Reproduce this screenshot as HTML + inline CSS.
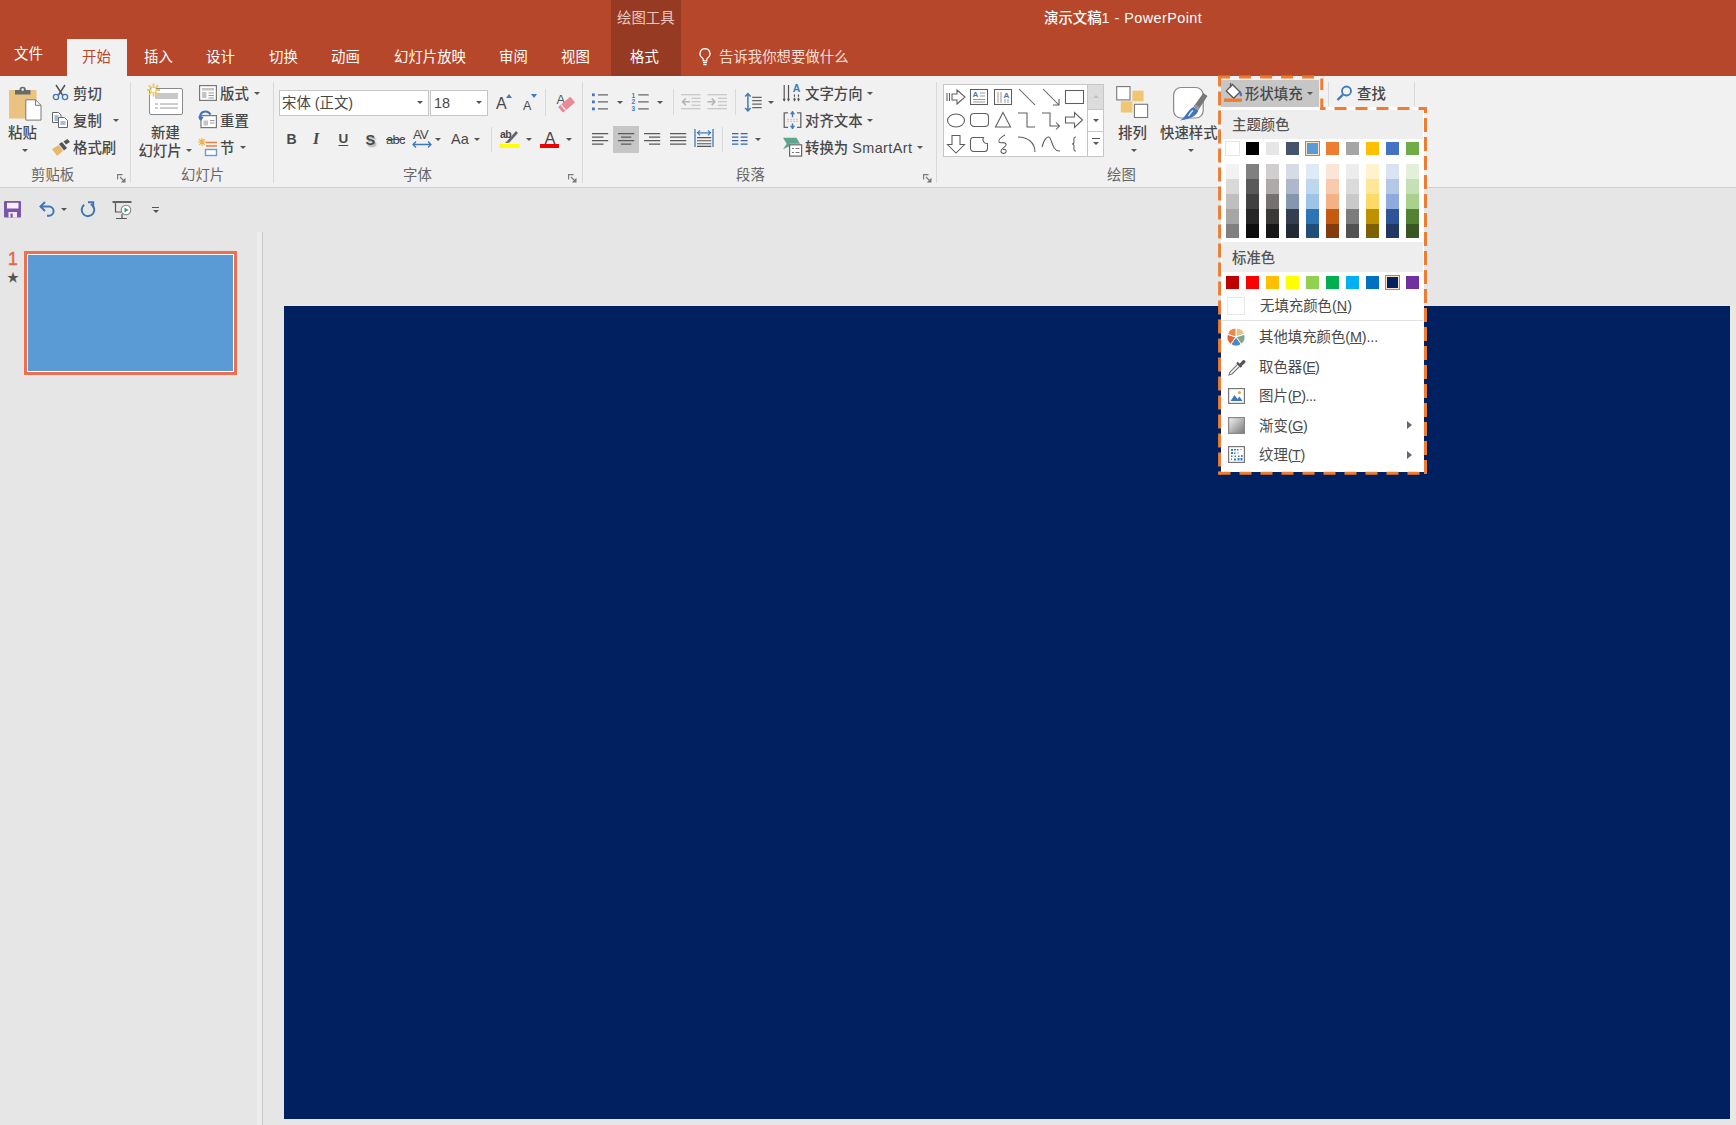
<!DOCTYPE html>
<html lang="zh-CN"><head><meta charset="utf-8"><title>演示文稿1 - PowerPoint</title>
<style>
*{box-sizing:border-box;margin:0;padding:0}
html,body{width:1736px;height:1125px;overflow:hidden;background:#e6e6e6}
body{position:relative;font-family:"Liberation Sans","Noto Sans CJK SC",sans-serif;font-size:14.4px;color:#484848;line-height:20px;font-weight:500}
.a{position:absolute}
.t{position:absolute;white-space:nowrap;height:22px;line-height:22px}
#title{left:0;top:0;width:1736px;height:76px;background:#b7472a}
#ctx{left:611px;top:0;width:70px;height:76px;background:#963a23}
#tabon{left:67px;top:39px;width:60px;height:38px;background:#f1f1f1}
.tab{color:#fff;top:46px;font-weight:400}
#ribbon{left:0;top:76px;width:1736px;height:112px;background:#f1f1f1;border-bottom:1px solid #d2d2d2}
.sep{position:absolute;width:1px;background:#d8d8d8;top:82px;height:101px}
.gl{color:#666;top:164px;font-weight:400}
.mi{font-weight:400;color:#4a4a4a}
.arr{position:absolute;width:0;height:0;border-left:3px solid transparent;border-right:3px solid transparent;border-top:3px solid #555}
svg{position:absolute;overflow:visible}
</style></head><body>
<div class="a" id="title"></div>
<div class="a" id="ctx"></div>
<div class="a" id="tabon"></div>
<div class="a" id="ribbon"></div>
<div class="t" style="left:617px;top:7px;color:#efc9bf;font-weight:400">绘图工具</div>
<div class="t" style="left:1044px;top:7px;color:#fff">演示文稿<span style="letter-spacing:.45px">1 - PowerPoint</span></div>
<div class="t tab" style="left:14px;top:43px">文件</div>
<div class="t tab" style="left:82px;color:#b7472a">开始</div>
<div class="t tab" style="left:144px">插入</div>
<div class="t tab" style="left:206px">设计</div>
<div class="t tab" style="left:269px">切换</div>
<div class="t tab" style="left:331px">动画</div>
<div class="t tab" style="left:394px">幻灯片放映</div>
<div class="t tab" style="left:499px">审阅</div>
<div class="t tab" style="left:561px">视图</div>
<div class="t tab" style="left:630px">格式</div>
<svg style="left:697px;top:47px" width="16" height="20" viewBox="0 0 16 20"><path d="M8 1.700a5 5 0 0 0-2.700 9.200c.6.500.9 1.100.9 1.800v1.100h3.600v-1.100c0-.7.300-1.300.9-1.800A5 5 0 0 0 8 1.700z" fill="none" stroke="#fff" stroke-width="1.300"/><path d="M6 15.600h4M6.400 17.600h3.200" stroke="#fff" stroke-width="1.200"/></svg>
<div class="t tab" style="left:719px;color:#f6ddd6;font-weight:400">告诉我你想要做什么</div>
<!--TABS-->
<!-- clipboard -->
<svg style="left:8px;top:84px" width="34" height="40" viewBox="0 0 34 40">
<rect x="1" y="6" width="27.500" height="28.500" fill="#eac282"/>
<path d="M7 10.500v-4.500h4.500a3.200 3.200 0 0 1 6.400 0h4.600v4.500z" fill="#6a6a6a"/><circle cx="14.700" cy="5.600" r="1.300" fill="#f1f1f1"/>
<path d="M17.800 15.800h9.700l5.500 5.500v14.800h-15.200z" fill="#fff" stroke="#7a7a7a" stroke-width="1"/><path d="M27.500 15.800v5.500h5.500" fill="none" stroke="#7a7a7a" stroke-width="1"/>
</svg>
<div class="t" style="left:8px;top:122px">粘贴</div>
<div class="arr" style="left:22px;top:149px"></div>
<svg style="left:52px;top:84px" width="17" height="17" viewBox="0 0 17 17">
<path d="M4 1l6.500 10M13 1L6.500 11" stroke="#555" stroke-width="1.500" fill="none"/>
<circle cx="4" cy="13" r="2.600" fill="none" stroke="#417ab9" stroke-width="1.400"/><circle cx="13" cy="13" r="2.600" fill="none" stroke="#417ab9" stroke-width="1.400"/>
</svg>
<div class="t" style="left:73px;top:83px">剪切</div>
<svg style="left:51px;top:111px" width="18" height="18" viewBox="0 0 18 18">
<path d="M1.500 1.500h6l2.500 2.500v7.500h-8.500z" fill="#fff" stroke="#666" stroke-width="1"/><path d="M3.500 5h4M3.500 7h4M3.500 9h4" stroke="#417ab9" stroke-width="1"/>
<path d="M7.500 6.500h6l3 3v7h-9z" fill="#fff" stroke="#666" stroke-width="1"/><path d="M9.500 11h5M9.500 13h5" stroke="#417ab9" stroke-width="1"/>
</svg>
<div class="t" style="left:73px;top:110px">复制</div>
<div class="arr" style="left:113px;top:119px"></div>
<svg style="left:51px;top:139px" width="20" height="18" viewBox="0 0 20 18">
<path d="M1 10l7-4 4 6-6 5z" fill="#e8b96a"/><path d="M8 5l3-2 5 6-3 2.500z" fill="#555"/><path d="M12.500 2.500l4-2.500 2.500 3-4 2.500z" fill="#555"/>
</svg>
<div class="t" style="left:73px;top:137px">格式刷</div>
<div class="t gl" style="left:31px">剪贴板</div>
<svg class="lau" style="left:117px;top:174px" width="9" height="9" viewBox="0 0 9 9"><path d="M.6 5.500V.6H5.500" fill="none" stroke="#777" stroke-width="1.100"/><path d="M3 3l4 4" stroke="#777" stroke-width="1.100"/><path d="M8.500 3.800v4.700H3.800z" fill="#777"/></svg>
<div class="sep" style="left:130px"></div>
<!-- slides -->
<svg style="left:146px;top:82px" width="38" height="36" viewBox="0 0 38 36">
<rect x="3.500" y="6.500" width="33" height="26" rx="1.500" fill="#fff" stroke="#8a8a8a"/>
<rect x="9" y="11" width="23" height="6" fill="#c8c8c8"/><path d="M9 22h3M14 22h18M9 26h3M14 26h18" stroke="#9a9a9a" stroke-width="1"/>
<g stroke="#f0c560" stroke-width="1.800"><path d="M7.500 1.500v13M1 8h13M2.900 3.400l9.200 9.200M12.100 3.400l-9.200 9.200"/></g><circle cx="7.500" cy="8" r="2.200" fill="#fff"/>
</svg>
<div class="t" style="left:151px;top:122px">新建</div>
<div class="t" style="left:138.500px;top:140px">幻灯片</div>
<div class="arr" style="left:186px;top:149px"></div>
<svg style="left:199px;top:85px" width="18" height="16" viewBox="0 0 18 16"><rect x=".6" y=".6" width="16.800" height="14.800" fill="#fff" stroke="#777" stroke-width="1.200"/><rect x="3" y="3" width="12" height="2.500" fill="#c4c4c4"/><rect x="3" y="7" width="4.500" height="6" fill="#c4c4c4"/><path d="M9.500 8h5.500M9.500 10.500h5.500M9.500 13h5.500" stroke="#999"/></svg>
<div class="t" style="left:220px;top:83px">版式</div><div class="arr" style="left:254px;top:92px"></div>
<svg style="left:198px;top:111px" width="20" height="18" viewBox="0 0 20 18"><rect x="3" y="4.600" width="15.400" height="12" fill="#fff" stroke="#777" stroke-width="1.200"/><rect x="5.500" y="9.500" width="4.500" height="5" fill="#c4c4c4"/><path d="M12 9.500h4.500M12 12h4.500" stroke="#999"/><path d="M2.500 8.500a5.500 5.500 0 0 1 10-5" fill="none" stroke="#3e76b6" stroke-width="2"/><path d="M0 5.500l2.800 4.500 3-4z" fill="#3e76b6"/></svg>
<div class="t" style="left:220px;top:110px">重置</div>
<svg style="left:198px;top:138px" width="20" height="19" viewBox="0 0 20 19"><g stroke="#eeb33f" stroke-width="1.200"><path d="M4 0v8M0 4h8M1.200 1.200l5.600 5.600M6.800 1.200l-5.600 5.600"/></g><path d="M8 4.500h11M8 8h11" stroke="#e0824a" stroke-width="1.600"/><rect x="7.500" y="11.500" width="11" height="6" fill="#fff" stroke="#6a9bd0" stroke-width="1.400"/></svg>
<div class="t" style="left:220px;top:137px">节</div><div class="arr" style="left:240px;top:146px"></div>
<div class="t gl" style="left:181px">幻灯片</div>
<div class="sep" style="left:273px"></div>
<!-- font -->
<div class="a" style="left:279px;top:90px;width:150px;height:26px;background:#fff;border:1px solid #c6c6c6"></div>
<div class="a" style="left:430px;top:90px;width:58px;height:26px;background:#fff;border:1px solid #c6c6c6"></div>
<div class="t" style="left:282px;top:92px;font-weight:400">宋体 (正文)</div><div class="arr" style="left:417px;top:101px"></div>
<div class="t" style="left:434px;top:92px">18</div><div class="arr" style="left:476px;top:101px"></div>
<div class="t" style="left:496px;top:93px;font-size:16px">A</div><div class="a" style="left:505.500px;top:94px;width:0;height:0;border-left:3px solid transparent;border-right:3px solid transparent;border-bottom:4px solid #417ab9"></div>
<div class="t" style="left:523px;top:94.500px;font-size:12.500px">A</div><div class="a" style="left:531px;top:94px;width:0;height:0;border-left:3px solid transparent;border-right:3px solid transparent;border-top:4px solid #417ab9"></div>
<div class="sep" style="left:545px;top:89px;height:27px"></div>
<svg style="left:555px;top:92px" width="20" height="20" viewBox="0 0 20 20"><text x="1.500" y="11.500" font-family="Liberation Sans,sans-serif" font-size="13" fill="#555">A</text><g transform="rotate(-40 11.500 12.500)"><rect x="3.500" y="9" width="16" height="7.500" rx="1" fill="#e88a98"/><rect x="6.500" y="9" width="1.300" height="7.500" fill="#f8e4e6"/></g></svg>
<div class="t" style="left:286.500px;top:128px;font-weight:bold;font-size:14px">B</div>
<div class="t" style="left:313px;top:128px;font-family:'Liberation Serif',serif;font-style:italic;font-weight:bold;font-size:16px">I</div>
<div class="t" style="left:338.500px;top:128px;font-weight:bold;font-size:13.500px;text-decoration:underline;text-underline-offset:1.500px">U</div>
<div class="t" style="left:365.500px;top:129px;font-weight:bold;font-size:14.500px;text-shadow:1.500px 1.500px 1.500px #aaa">S</div>
<div class="t" style="left:386px;top:129px;font-size:13px;text-decoration:line-through;letter-spacing:-.7px">abc</div>
<div class="t" style="left:413px;top:124px;font-size:13px;letter-spacing:-.8px">AV</div>
<svg style="left:411.500px;top:141px" width="20" height="7" viewBox="0 0 20 7"><path d="M1 3.500h18M4 .5l-3 3 3 3M16 .5l3 3-3 3" fill="none" stroke="#417ab9" stroke-width="1.300"/></svg>
<div class="arr" style="left:435px;top:138px"></div>
<div class="t" style="left:451px;top:128px;font-size:14.500px">Aa</div><div class="arr" style="left:474px;top:138px"></div>
<div class="sep" style="left:491px;top:127px;height:25px"></div>
<div class="t" style="left:500px;top:123px;font-size:10.500px;letter-spacing:-.6px;font-weight:bold">ab</div>
<svg style="left:498px;top:128px" width="22" height="22" viewBox="0 0 22 22"><path d="M9 13l9-10 2 2-9 10z" fill="#666"/><path d="M7 15l2-2 2 2z" fill="#666"/><rect x="1.500" y="16" width="20" height="4" fill="#ffff00"/></svg>
<div class="arr" style="left:526px;top:138px"></div>
<div class="t" style="left:544.500px;top:127px;font-size:16.500px">A</div><div class="a" style="left:540px;top:144px;width:19px;height:4px;background:#f00000"></div>
<div class="arr" style="left:566px;top:138px"></div>
<div class="t gl" style="left:403px">字体</div>
<svg class="lau" style="left:568px;top:174px" width="9" height="9" viewBox="0 0 9 9"><path d="M.6 5.500V.6H5.500" fill="none" stroke="#777" stroke-width="1.100"/><path d="M3 3l4 4" stroke="#777" stroke-width="1.100"/><path d="M8.500 3.800v4.700H3.800z" fill="#777"/></svg>
<div class="sep" style="left:582px"></div>
<!-- paragraph -->
<svg style="left:592px;top:93px" width="17" height="18" viewBox="0 0 17 18"><g fill="#417ab9"><rect x="0" y=".4" width="2.800" height="2.800"/><rect x="0" y="7.500" width="2.800" height="2.800"/><rect x="0" y="14.500" width="2.800" height="2.800"/></g><path d="M6 1.800h10M6 8.900h10M6 15.900h10" stroke="#666" stroke-width="1.200"/></svg>
<div class="arr" style="left:616.500px;top:101px"></div>
<svg style="left:631px;top:93px" width="19" height="18" viewBox="0 0 19 18"><g fill="#417ab9" font-size="6.500" font-weight="bold" font-family="Liberation Sans,sans-serif"><text x=".5" y="4.500">1</text><text x=".5" y="11.300">2</text><text x=".5" y="18">3</text></g><path d="M7.200 1.800h10.500M7.200 8.900h10.500M7.200 15.900h10.500" stroke="#666" stroke-width="1.200"/></svg>
<div class="arr" style="left:657px;top:101px"></div>
<div class="sep" style="left:673px;top:89px;height:26px"></div>
<svg style="left:681px;top:94px" width="20" height="16" viewBox="0 0 20 16"><path d="M0 .7h19.500M10.500 4.200h9M10.500 7.800h9M10.500 11.300h9M0 14.800h19.500" stroke="#bdbdbd" stroke-width="1.100"/><path d="M9 7.800H1.500M4.800 4.500L1.500 7.800l3.300 3.300" fill="none" stroke="#b4b4b4" stroke-width="1.500"/></svg>
<svg style="left:707px;top:94px" width="20" height="16" viewBox="0 0 20 16"><path d="M.5 .7h19.500M11 4.200h9M11 7.800h9M11 11.300h9M.5 14.800h19.500" stroke="#bdbdbd" stroke-width="1.100"/><path d="M.5 7.800h7.500M4.700 4.500l3.300 3.300-3.300 3.300" fill="none" stroke="#b4b4b4" stroke-width="1.500"/></svg>
<div class="sep" style="left:735px;top:89px;height:26px"></div>
<svg style="left:744px;top:92px" width="19" height="20" viewBox="0 0 19 20"><path d="M8.200 5.300h9.500M8.200 8.700h9.500M8.200 12.200h9.500M8.200 15.600h9.500" stroke="#666" stroke-width="1.200"/><path d="M3.900 1.500v17M1.200 4.500L3.900 1.500l2.700 3M1.200 16l2.700 3 2.700-3" fill="none" stroke="#417ab9" stroke-width="1.500"/></svg>
<div class="arr" style="left:767.500px;top:101px"></div>
<div class="a" style="left:613px;top:126px;width:26px;height:27px;background:#c6c6c6"></div>
<svg style="left:592px;top:132px" width="17" height="15" viewBox="0 0 17 15"><path d="M0 1.600h16.200M0 5.100h11.500M0 8.600h16.200M0 12.200h11.500" stroke="#5a5a5a" stroke-width="1.200"/></svg>
<svg style="left:618px;top:132px" width="17" height="15" viewBox="0 0 17 15"><path d="M0 1.600h16.200M3 5.100h10.300M0 8.600h16.200M3 12.200h10.300" stroke="#5a5a5a" stroke-width="1.200"/></svg>
<svg style="left:644px;top:132px" width="17" height="15" viewBox="0 0 17 15"><path d="M0 1.600h16.200M5 5.100h11.200M0 8.600h16.200M5 12.200h11.200" stroke="#5a5a5a" stroke-width="1.200"/></svg>
<svg style="left:670px;top:132px" width="17" height="15" viewBox="0 0 17 15"><path d="M0 1.600h16.200M0 5.100h16.200M0 8.600h16.200M0 12.200h16.200" stroke="#5a5a5a" stroke-width="1.200"/></svg>
<svg style="left:694px;top:129px" width="20" height="18" viewBox="0 0 20 18"><path d="M1 0v18M19 0v18" stroke="#417ab9" stroke-width="1.300"/><path d="M3.500 3.800h13M6 1.300l-2.500 2.500 2.500 2.500M14 1.300l2.500 2.500-2.500 2.500" fill="none" stroke="#417ab9" stroke-width="1.200"/><path d="M3 8.600h14.300M3 11.800h14.300M3 14.800h14.300M3 17.400h14.300" stroke="#555" stroke-width="1.100"/></svg>
<div class="sep" style="left:722px;top:127px;height:25px"></div>
<svg style="left:732px;top:132px" width="17" height="15" viewBox="0 0 17 15"><path d="M0 1.600h6.400M8.700 1.600h6.900M0 5.100h6.400M8.700 5.100h6.900M0 8.600h6.400M8.700 8.600h6.900M0 12.200h6.400M8.700 12.200h6.900" stroke="#3567a8" stroke-width="1.300"/></svg>
<div class="arr" style="left:754.500px;top:138px"></div>
<svg style="left:783px;top:83px" width="18" height="20" viewBox="0 0 18 20"><path d="M1.200 2v16M5.500 2v16" stroke="#555" stroke-width="1.200"/><path d="M11.500 11.500v6.500M15.500 11.500v6.500" stroke="#555" stroke-width="1.200" stroke-dasharray="2.200 1"/><path d="M-.3 15.800l1.500 3 1.500-3zM4 15.800l1.500 3 1.500-3zM10 15.800l1.500 3 1.500-3zM14 15.800l1.500 3 1.500-3z" fill="#555"/><text x="9.800" y="9" font-size="10.500" font-weight="bold" fill="#417ab9" font-family="Liberation Sans,sans-serif">A</text></svg>
<div class="t" style="left:805px;top:83px">文字方向</div><div class="arr" style="left:866.500px;top:92px"></div>
<svg style="left:783px;top:110px" width="19" height="20" viewBox="0 0 19 20"><path d="M5 2.800H1.200v14.500H5M14 2.800h3.800v14.500H14" fill="none" stroke="#666" stroke-width="1.300"/><path d="M4 9.300h11M4 11.300h11" stroke="#e9b7a6" stroke-width="1" stroke-dasharray="2 1"/><path d="M9.500 1.200v6M9.500 19v-5.500" fill="none" stroke="#417ab9" stroke-width="1.400"/><path d="M6.800 4.200L9.500 1l2.700 3.200zM6.800 15.800l2.700 3.400 2.700-3.400z" fill="#417ab9"/></svg>
<div class="t" style="left:805px;top:110px">对齐文本</div><div class="arr" style="left:866.500px;top:119px"></div>
<svg style="left:783px;top:137px" width="20" height="21" viewBox="0 0 20 21"><path d="M0 .7h13.500l3.500 6H6.500v2.500l-6.500 3 3.700-5.500z" fill="#5fa58c"/><rect x="6.600" y="7.800" width="12" height="11.300" fill="#fff" stroke="#666" stroke-width="1.200"/><path d="M9 11.500h2M12.500 11.500h4M9 15.500h2M12.500 15.500h4" stroke="#777" stroke-width="1.100"/></svg>
<div class="t" style="left:805px;top:137px">转换为 <span style="letter-spacing:.45px">SmartArt</span></div><div class="arr" style="left:917px;top:146px"></div>
<div class="t gl" style="left:736px">段落</div>
<svg class="lau" style="left:923px;top:174px" width="9" height="9" viewBox="0 0 9 9"><path d="M.6 5.500V.6H5.500" fill="none" stroke="#777" stroke-width="1.100"/><path d="M3 3l4 4" stroke="#777" stroke-width="1.100"/><path d="M8.500 3.800v4.700H3.800z" fill="#777"/></svg>
<div class="sep" style="left:936px"></div>
<!-- drawing -->
<div class="a" style="left:943px;top:84px;width:161px;height:73px;background:#fff;border:1px solid #c6c6c6"></div>
<div class="a" style="left:1087px;top:85px;width:16px;height:24px;background:#dcdcdc"></div><div class="a" style="left:1087px;top:84px;width:1px;height:73px;background:#c6c6c6"></div><div class="a" style="left:1087px;top:109px;width:17px;height:1px;background:#c6c6c6"></div><div class="a" style="left:1087px;top:131px;width:17px;height:1px;background:#c6c6c6"></div>
<div class="a" style="left:1093px;top:95px;width:0;height:0;border-left:3px solid transparent;border-right:3px solid transparent;border-bottom:3px solid #c0c0c0"></div><div class="arr" style="left:1093px;top:119px"></div><div class="a" style="left:1092px;top:138px;width:8px;height:1px;background:#555"></div><div class="arr" style="left:1093px;top:142px"></div>
<svg style="left:946px;top:86.5px" width="20" height="20" viewBox="0 0 20 20"><path d="M1 6v8M3.500 6v8M6 7h5V3l8 7-8 7v-4H6z" fill="none" stroke="#5e5e5e" stroke-width="1.05"/></svg>
<svg style="left:969px;top:86.5px" width="20" height="20" viewBox="0 0 20 20"><rect x="1.500" y="2.500" width="17" height="15" fill="none" stroke="#5e5e5e" stroke-width="1.05"/><text x="3.500" y="10" font-size="8" font-weight="bold" fill="#417ab9" font-family="Liberation Sans,sans-serif">A</text><path d="M11 6h5M11 9h5M4 12.500h12M4 15h12" stroke="#999" stroke-width="1"/></svg>
<svg style="left:993px;top:86.5px" width="20" height="20" viewBox="0 0 20 20"><rect x="1.500" y="2.500" width="17" height="15" fill="none" stroke="#5e5e5e" stroke-width="1.05"/><text x="10.500" y="10.500" font-size="8" font-weight="bold" fill="#417ab9" font-family="Liberation Sans,sans-serif">A</text><path d="M5 5v11M8 5v11M12 12v4M15 12v4" stroke="#999" stroke-width="1"/></svg>
<svg style="left:1017px;top:86.5px" width="20" height="20" viewBox="0 0 20 20"><path d="M2 2l16 16" fill="none" stroke="#5e5e5e" stroke-width="1.05"/></svg>
<svg style="left:1041px;top:86.5px" width="20" height="20" viewBox="0 0 20 20"><path d="M2 2l16 16M18 12v6h-6" fill="none" stroke="#5e5e5e" stroke-width="1.05"/></svg>
<svg style="left:1064px;top:86.5px" width="20" height="20" viewBox="0 0 20 20"><rect x="1.500" y="3.500" width="18" height="13" fill="none" stroke="#5e5e5e" stroke-width="1.05"/></svg>
<svg style="left:946px;top:110px" width="20" height="20" viewBox="0 0 20 20"><ellipse cx="10" cy="10.500" rx="8.500" ry="6.500" fill="none" stroke="#5e5e5e" stroke-width="1.05"/></svg>
<svg style="left:969px;top:110px" width="20" height="20" viewBox="0 0 20 20"><rect x="1.500" y="3.500" width="18" height="13" rx="3.500" fill="none" stroke="#5e5e5e" stroke-width="1.05"/></svg>
<svg style="left:993px;top:110px" width="20" height="20" viewBox="0 0 20 20"><path d="M10 2.500l7.500 14.500h-15z" fill="none" stroke="#5e5e5e" stroke-width="1.05"/></svg>
<svg style="left:1017px;top:110px" width="20" height="20" viewBox="0 0 20 20"><path d="M1 3h9v14h8" fill="none" stroke="#5e5e5e" stroke-width="1.05"/></svg>
<svg style="left:1041px;top:110px" width="20" height="20" viewBox="0 0 20 20"><path d="M1 3h8v13h9M15 12.500l3.500 3.500-3.500 3.500" fill="none" stroke="#5e5e5e" stroke-width="1.05"/></svg>
<svg style="left:1064px;top:110px" width="20" height="20" viewBox="0 0 20 20"><path d="M1.500 7h9V2.500l8 7.500-8 7.500V13h-9z" fill="none" stroke="#5e5e5e" stroke-width="1.05"/></svg>
<svg style="left:946px;top:133.5px" width="20" height="20" viewBox="0 0 20 20"><path d="M6 1.500h8v9h4.500L10 19 1.500 10.500H6z" fill="none" stroke="#5e5e5e" stroke-width="1.05"/></svg>
<svg style="left:969px;top:133.5px" width="20" height="20" viewBox="0 0 20 20"><path d="M3.500 3.500h11a4 4 0 0 0 4 6v5a3 3 0 0 1-3 3h-11a3 3 0 0 1-3-3v-8a3 3 0 0 1 2-3z" fill="none" stroke="#5e5e5e" stroke-width="1.05"/></svg>
<svg style="left:993px;top:133.5px" width="20" height="20" viewBox="0 0 20 20"><path d="M12 1c-4 2-7 5-6 7s6-1 7 2-5 4-5 7 4 3 5 1-2-4-3-2" fill="none" stroke="#5e5e5e" stroke-width="1.05"/></svg>
<svg style="left:1017px;top:133.5px" width="20" height="20" viewBox="0 0 20 20"><path d="M1 3c9 0 17 5 17 15" fill="none" stroke="#5e5e5e" stroke-width="1.05"/></svg>
<svg style="left:1041px;top:133.5px" width="20" height="20" viewBox="0 0 20 20"><path d="M1 13c2-8 6-12 8-9s3 14 10 13" fill="none" stroke="#5e5e5e" stroke-width="1.05"/></svg>
<svg style="left:1064px;top:133.5px" width="20" height="20" viewBox="0 0 20 20"><path d="M12 3c-3 0-2 3-2 5s-1 2-2 2c1 0 2 0 2 2s-1 5 2 5" fill="none" stroke="#5e5e5e" stroke-width="1.05"/></svg>
<svg style="left:1116px;top:86px" width="33" height="33" viewBox="0 0 33 33"><rect x="16.400" y="4.700" width="11.200" height="10.600" fill="#f0c671"/><rect x="4.800" y="15.300" width="11.600" height="11.200" fill="#f0c671"/><rect x=".7" y=".6" width="13.300" height="13.300" fill="#fff" stroke="#777" stroke-width="1.100"/><rect x="18.400" y="18.300" width="13.200" height="13.200" fill="#fff" stroke="#777" stroke-width="1.100"/></svg>
<div class="t" style="left:1118px;top:122px">排列</div><div class="arr" style="left:1131px;top:149px"></div>
<svg style="left:1170px;top:84px" width="38" height="38" viewBox="0 0 38 38"><rect x="3.600" y="3.500" width="29.600" height="30.500" rx="7.500" fill="#fff" stroke="#8a8a8a" stroke-width="1.200"/><path d="M33.300 9l4.200 3-9.200 14-4.800-3.200z" fill="#777"/><path d="M25.200 20.300l4.800 3.200-1.300 2-4.800-3.200z" fill="#9a9a9a"/><path d="M23.300 23l5 3.300c-1.500 5.500-7 8.500-18.300 10.200 5.500-3 6.500-9.500 13.300-13.500z" fill="#4477b8"/><path d="M23 26.500c-2 1.500-3 3.500-4.500 5.500" stroke="#dfe9f5" stroke-width="1.500" fill="none"/></svg>
<div class="t" style="left:1160px;top:122px">快速样式</div><div class="arr" style="left:1188px;top:149px"></div>
<div class="t gl" style="left:1107px">绘图</div>
<!-- fill button -->
<div class="a" style="left:1221px;top:80px;width:98px;height:27px;background:#c6c6c6"></div>
<svg style="left:1224px;top:82px" width="19" height="21" viewBox="0 0 19 21"><path d="M8.500 2.500l7.500 7.500-6.300 6.300-7.400-7.400z" fill="#fff" stroke="#555" stroke-width="1.300"/><path d="M6.500 1v4.500" stroke="#555" stroke-width="1.300"/><path d="M16 8.500c1.800 2.500 2.800 4.500 1.600 5.600s-2.900-.3-1.600-5.600z" fill="#417ab9"/><rect x="0" y="16.500" width="18" height="3.400" fill="#ed7d31"/></svg>
<div class="t" style="left:1245px;top:83px">形状填充</div><div class="arr" style="left:1307px;top:92px"></div>
<div class="sep" style="left:1328px;top:82px;height:24px"></div>
<svg style="left:1336px;top:85px" width="17" height="17" viewBox="0 0 17 17"><circle cx="10.500" cy="6" r="4.500" fill="none" stroke="#417ab9" stroke-width="1.800"/><path d="M7 9.500L1.500 15" stroke="#417ab9" stroke-width="2.400"/></svg>
<div class="t" style="left:1357px;top:83px">查找</div>
<div class="sep" style="left:1414px;top:82px;height:24px"></div>
<!--RIBBON-->
<!-- QAT -->
<svg style="left:4px;top:201px" width="17" height="17" viewBox="0 0 17 17"><rect x="0" y="0" width="17" height="16.500" rx="1" fill="#7a56a8"/><rect x="3" y="1.800" width="11.500" height="5.700" fill="#fbeefb"/><rect x="4.500" y="11" width="8.500" height="5.500" fill="#f4e8f6"/><rect x="6.500" y="12.500" width="2.200" height="4" fill="#7a56a8"/></svg>
<svg style="left:38px;top:200px" width="18" height="18" viewBox="0 0 18 18"><path d="M2.500 6.500h8.500a4.600 4.600 0 0 1 0 9.200h-2" fill="none" stroke="#3e76b6" stroke-width="2"/><path d="M7 2l-4.500 4.500 4.500 4.500" fill="none" stroke="#3e76b6" stroke-width="2"/></svg>
<div class="arr" style="left:61px;top:208px"></div>
<svg style="left:79px;top:200px" width="18" height="18" viewBox="0 0 18 18"><path d="M11.800 4.200a6.300 6.300 0 1 1-6.600.6" fill="none" stroke="#3e76b6" stroke-width="2"/><path d="M9 2.200h5.200v5.200" fill="none" stroke="#3e76b6" stroke-width="2"/></svg>
<svg style="left:112px;top:201px" width="21" height="19" viewBox="0 0 21 19"><path d="M.5 1h19" stroke="#555" stroke-width="1.800"/><path d="M3.500 2v9h6M10 13v4M4 17.500h11" fill="none" stroke="#555" stroke-width="1.200"/><circle cx="14" cy="9" r="4.800" fill="#fff" stroke="#888" stroke-width="1.100"/><path d="M12.500 6.500l4 2.500-4 2.500z" fill="#3a9a6a"/></svg>
<div class="a" style="left:152px;top:207px;width:7px;height:1px;background:#555"></div>
<div class="arr" style="left:152.500px;top:210px"></div>
<!--QAT-->
<!-- panel -->
<div class="t" style="left:8px;top:248px;font-size:17.500px;color:#e0694a;-webkit-text-stroke:.5px #e0694a">1</div>
<div class="t" style="left:7px;top:267px;font-size:12px;color:#555">★</div>
<div class="a" style="left:24px;top:251px;width:213px;height:124px;border:3px solid #ee6e4f;background:#5b9bd5;box-shadow:inset 0 0 0 1px #fff"></div>
<div class="a" style="left:257px;top:232px;width:5px;height:893px;background:#ececec"></div>
<div class="a" style="left:262px;top:232px;width:1px;height:893px;background:#c8c8c8"></div>
<!--PANEL-->
<!-- slide -->
<div class="a" style="left:1730px;top:306px;width:6px;height:813px;background:linear-gradient(90deg,#e2e9ea,#ece9dd 55%,#ece2e5)"></div>
<div class="a" style="left:284px;top:306px;width:1446px;height:813px;background:#002060"></div>
<!--SLIDE-->
<!-- dropdown -->
<div class="a" style="left:1221px;top:107px;width:203px;height:365px;background:#fff"></div>
<div class="a" style="left:1222px;top:110px;width:201px;height:29px;background:#eee"></div>
<div class="t" style="left:1232px;top:114px;font-weight:500;color:#555">主题颜色</div>
<div class="a" style="left:1222px;top:242px;width:201px;height:30px;background:#eee"></div>
<div class="t" style="left:1232px;top:247px;font-weight:500;color:#555">标准色</div>
<div class="a" style="left:1226px;top:142px;width:13px;height:13px;background:#FFFFFF;outline:1px solid #e6e6e6"></div><div class="a" style="left:1226px;top:164px;width:13px;height:15px;background:#F2F2F2"></div><div class="a" style="left:1226px;top:179px;width:13px;height:15px;background:#D9D9D9"></div><div class="a" style="left:1226px;top:194px;width:13px;height:15px;background:#BFBFBF"></div><div class="a" style="left:1226px;top:209px;width:13px;height:15px;background:#A6A6A6"></div><div class="a" style="left:1226px;top:224px;width:13px;height:14px;background:#808080"></div>
<div class="a" style="left:1246px;top:142px;width:13px;height:13px;background:#000000"></div><div class="a" style="left:1246px;top:164px;width:13px;height:15px;background:#808080"></div><div class="a" style="left:1246px;top:179px;width:13px;height:15px;background:#595959"></div><div class="a" style="left:1246px;top:194px;width:13px;height:15px;background:#404040"></div><div class="a" style="left:1246px;top:209px;width:13px;height:15px;background:#262626"></div><div class="a" style="left:1246px;top:224px;width:13px;height:14px;background:#0D0D0D"></div>
<div class="a" style="left:1266px;top:142px;width:13px;height:13px;background:#E7E6E6"></div><div class="a" style="left:1266px;top:164px;width:13px;height:15px;background:#D0CECE"></div><div class="a" style="left:1266px;top:179px;width:13px;height:15px;background:#AEAAAA"></div><div class="a" style="left:1266px;top:194px;width:13px;height:15px;background:#767171"></div><div class="a" style="left:1266px;top:209px;width:13px;height:15px;background:#3B3838"></div><div class="a" style="left:1266px;top:224px;width:13px;height:14px;background:#181717"></div>
<div class="a" style="left:1286px;top:142px;width:13px;height:13px;background:#44546A"></div><div class="a" style="left:1286px;top:164px;width:13px;height:15px;background:#D6DCE5"></div><div class="a" style="left:1286px;top:179px;width:13px;height:15px;background:#ADB9CA"></div><div class="a" style="left:1286px;top:194px;width:13px;height:15px;background:#8497B0"></div><div class="a" style="left:1286px;top:209px;width:13px;height:15px;background:#333F50"></div><div class="a" style="left:1286px;top:224px;width:13px;height:14px;background:#222A35"></div>
<div class="a" style="left:1306px;top:142px;width:13px;height:13px;background:#5B9BD5"></div><div class="a" style="left:1306px;top:164px;width:13px;height:15px;background:#DEEBF7"></div><div class="a" style="left:1306px;top:179px;width:13px;height:15px;background:#BDD7EE"></div><div class="a" style="left:1306px;top:194px;width:13px;height:15px;background:#9DC3E6"></div><div class="a" style="left:1306px;top:209px;width:13px;height:15px;background:#2E75B6"></div><div class="a" style="left:1306px;top:224px;width:13px;height:14px;background:#1F4E79"></div>
<div class="a" style="left:1326px;top:142px;width:13px;height:13px;background:#ED7D31"></div><div class="a" style="left:1326px;top:164px;width:13px;height:15px;background:#FBE5D6"></div><div class="a" style="left:1326px;top:179px;width:13px;height:15px;background:#F8CBAD"></div><div class="a" style="left:1326px;top:194px;width:13px;height:15px;background:#F4B183"></div><div class="a" style="left:1326px;top:209px;width:13px;height:15px;background:#C55A11"></div><div class="a" style="left:1326px;top:224px;width:13px;height:14px;background:#843C0C"></div>
<div class="a" style="left:1346px;top:142px;width:13px;height:13px;background:#A5A5A5"></div><div class="a" style="left:1346px;top:164px;width:13px;height:15px;background:#EDEDED"></div><div class="a" style="left:1346px;top:179px;width:13px;height:15px;background:#DBDBDB"></div><div class="a" style="left:1346px;top:194px;width:13px;height:15px;background:#C9C9C9"></div><div class="a" style="left:1346px;top:209px;width:13px;height:15px;background:#7C7C7C"></div><div class="a" style="left:1346px;top:224px;width:13px;height:14px;background:#525252"></div>
<div class="a" style="left:1366px;top:142px;width:13px;height:13px;background:#FFC000"></div><div class="a" style="left:1366px;top:164px;width:13px;height:15px;background:#FFF2CC"></div><div class="a" style="left:1366px;top:179px;width:13px;height:15px;background:#FFE699"></div><div class="a" style="left:1366px;top:194px;width:13px;height:15px;background:#FFD966"></div><div class="a" style="left:1366px;top:209px;width:13px;height:15px;background:#BF9000"></div><div class="a" style="left:1366px;top:224px;width:13px;height:14px;background:#7F6000"></div>
<div class="a" style="left:1386px;top:142px;width:13px;height:13px;background:#4472C4"></div><div class="a" style="left:1386px;top:164px;width:13px;height:15px;background:#DAE3F3"></div><div class="a" style="left:1386px;top:179px;width:13px;height:15px;background:#B4C7E7"></div><div class="a" style="left:1386px;top:194px;width:13px;height:15px;background:#8FAADC"></div><div class="a" style="left:1386px;top:209px;width:13px;height:15px;background:#2F5597"></div><div class="a" style="left:1386px;top:224px;width:13px;height:14px;background:#203864"></div>
<div class="a" style="left:1406px;top:142px;width:13px;height:13px;background:#70AD47"></div><div class="a" style="left:1406px;top:164px;width:13px;height:15px;background:#E2F0D9"></div><div class="a" style="left:1406px;top:179px;width:13px;height:15px;background:#C5E0B4"></div><div class="a" style="left:1406px;top:194px;width:13px;height:15px;background:#A9D18E"></div><div class="a" style="left:1406px;top:209px;width:13px;height:15px;background:#548235"></div><div class="a" style="left:1406px;top:224px;width:13px;height:14px;background:#385723"></div>
<div class="a" style="left:1226px;top:276px;width:13px;height:13px;background:#C00000"></div><div class="a" style="left:1246px;top:276px;width:13px;height:13px;background:#FF0000"></div><div class="a" style="left:1266px;top:276px;width:13px;height:13px;background:#FFC000"></div><div class="a" style="left:1286px;top:276px;width:13px;height:13px;background:#FFFF00"></div><div class="a" style="left:1306px;top:276px;width:13px;height:13px;background:#92D050"></div><div class="a" style="left:1326px;top:276px;width:13px;height:13px;background:#00B050"></div><div class="a" style="left:1346px;top:276px;width:13px;height:13px;background:#00B0F0"></div><div class="a" style="left:1366px;top:276px;width:13px;height:13px;background:#0070C0"></div><div class="a" style="left:1386px;top:276px;width:13px;height:13px;background:#002060"></div><div class="a" style="left:1406px;top:276px;width:13px;height:13px;background:#7030A0"></div>
<div class="a" style="left:1305px;top:141px;width:15px;height:15px;border:1px solid #e8762c;box-shadow:inset 0 0 0 1px #fbe0c8"></div>
<div class="a" style="left:1385px;top:275px;width:15px;height:15px;border:1px solid #e8762c;box-shadow:inset 0 0 0 1px #fbe0c8"></div>
<div class="a" style="left:1227px;top:297px;width:18px;height:18px;background:#fff;border:1px solid #e8e8e8"></div>
<div class="t mi" style="left:1260px;top:295px">无填充颜色(<u>N</u>)</div>
<div class="a" style="left:1222px;top:320px;width:201px;height:1px;background:#e1e1e1"></div>
<svg style="left:1227px;top:328px" width="18" height="18" viewBox="0 0 18 18"><g stroke="#fff" stroke-width="1"><path d="M9 9L9 0A9 9 0 0 1 17.560 6.220z" fill="#e8c08a"/><path d="M9 9L17.560 6.220A9 9 0 0 1 14.290 16.280z" fill="#7aa88a"/><path d="M9 9L14.290 16.280A9 9 0 0 1 3.710 16.280z" fill="#4d86c0"/><path d="M9 9L3.710 16.280A9 9 0 0 1 .44 6.220z" fill="#e0673a"/><path d="M9 9L.44 6.220A9 9 0 0 1 9 0z" fill="#e68a4c"/></g></svg>
<div class="t mi" style="left:1259px;top:326px">其他填充颜色<span style="letter-spacing:-.15px">(<u>M</u>)...</span></div>
<svg style="left:1227px;top:358px" width="19" height="19" viewBox="0 0 19 19"><path d="M2 17l1-3 8-8 2 2-8 8z" fill="#fff" stroke="#777" stroke-width="1.100"/><path d="M10 4.500l4.500 4.500" stroke="#555" stroke-width="2.200"/><path d="M12 6.500l3.500-4a1.700 1.700 0 0 1 2.500 2.500l-4 3.500z" fill="#555"/></svg>
<div class="t mi" style="left:1259px;top:356px">取色器<span style="letter-spacing:-.8px">(<u>E</u>)</span></div>
<svg style="left:1228px;top:388px" width="17" height="16" viewBox="0 0 17 16"><rect x=".6" y=".6" width="15.800" height="14.800" fill="#fff" stroke="#777" stroke-width="1.200"/><path d="M2.500 13l4-6 3 4 2-2.500 3 4.500z" fill="#3f78b8"/><circle cx="11.500" cy="4.500" r="1.500" fill="#e8a33d"/></svg>
<div class="t mi" style="left:1259px;top:385px">图片<span style="letter-spacing:-.5px">(<u>P</u>)...</span></div>
<svg style="left:1228px;top:417px" width="17" height="17" viewBox="0 0 17 17"><defs><linearGradient id="gr" x1="0" y1="0" x2="1" y2="1"><stop offset="0" stop-color="#f4f4f4"/><stop offset="1" stop-color="#777"/></linearGradient></defs><rect x=".6" y=".6" width="15.800" height="15.800" fill="url(#gr)" stroke="#888" stroke-width="1.200"/></svg>
<div class="t mi" style="left:1259px;top:415px">渐变<span style="letter-spacing:-.45px">(<u>G</u>)</span></div>
<div class="a" style="left:1407px;top:421px;width:0;height:0;border-top:4px solid transparent;border-bottom:4px solid transparent;border-left:5px solid #666"></div>
<svg style="left:1228px;top:446px" width="17" height="17" viewBox="0 0 17 17"><rect x=".6" y=".6" width="15.800" height="15.800" fill="#fff" stroke="#777" stroke-width="1.200"/><g fill="#3f78b8"><rect x="3" y="3" width="2" height="2"/><rect x="6" y="3" width="2" height="1.500"/><rect x="9" y="3" width="1.500" height="1.500"/><rect x="12.500" y="3" width="1" height="1"/><rect x="3" y="6" width="2" height="2"/><rect x="6" y="6.500" width="1.500" height="1.500"/><rect x="9.500" y="6.500" width="1" height="1"/><rect x="3" y="9.500" width="1.500" height="1.500"/><rect x="6.500" y="9.500" width="1.500" height="1.500"/><rect x="10" y="9.500" width="1.500" height="1.500"/><rect x="13" y="9" width="1.500" height="2"/><rect x="3" y="12.500" width="1" height="1.500"/><rect x="6" y="12.500" width="2" height="2"/><rect x="9.500" y="12" width="2" height="2.500"/><rect x="12.500" y="12" width="2" height="2.500"/></g></svg>
<div class="t mi" style="left:1259px;top:444px">纹理<span style="letter-spacing:-.5px">(<u>T</u>)</span></div>
<div class="a" style="left:1407px;top:451px;width:0;height:0;border-top:4px solid transparent;border-bottom:4px solid transparent;border-left:5px solid #666"></div>
<!-- dashed orange outline -->
<svg style="left:0;top:0" width="1736" height="1125" viewBox="0 0 1736 1125"><g fill="none" stroke="#ee7d31" stroke-width="3">
<path d="M1219.600 77V474.500" stroke-dasharray="14 5" stroke-dashoffset="4.500"/>
<path d="M1218.100 77H1323.300" stroke-dasharray="12 9"/>
<path d="M1321.800 78.500V110" stroke-dasharray="11.500 8.500"/>
<path d="M1320.300 108.500H1427" stroke-dasharray="12 9" stroke-dashoffset="6.800"/>
<path d="M1425.500 107V474.500" stroke-dasharray="14 5" stroke-dashoffset="8"/>
<path d="M1218.500 473.200H1427" stroke-dasharray="12 9"/>
</g></svg>
<!--MENU-->
</body></html>
